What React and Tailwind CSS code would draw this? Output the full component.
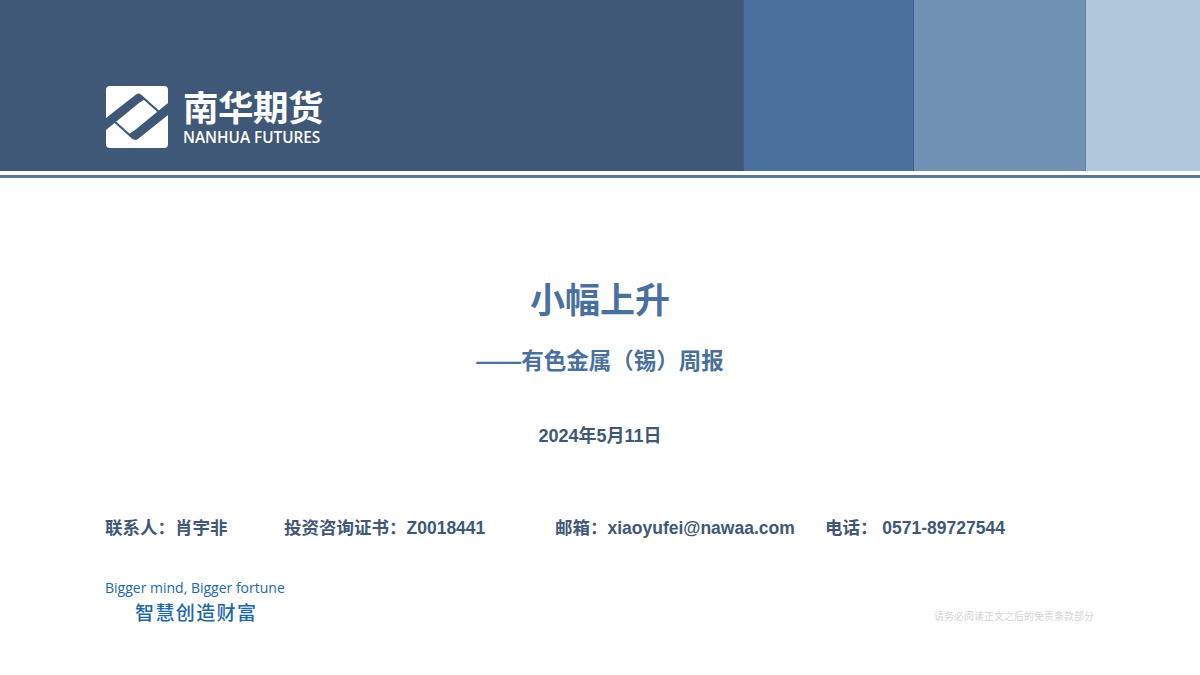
const sans = "font-['Liberation_Sans','Noto_Sans_CJK_SC',sans-serif]";

// logo mark: two dark bands joined by thin edges, on a white tile
function LogoMark() {
  return (
    <svg width="62" height="62" viewBox="0 0 62 62" className="shrink-0">
      <rect x="0" y="0" width="62" height="62" rx="4" fill="#fff" />
      <path d="M0 32 L30 8.5 Q33 6.5 35 9 L39 13 L33 17 L0 44 Z" fill="#3f5877" />
      <path d="M62 29 L32 53 Q29 55 27 52.5 L23 48 L29 44 L62 17 Z" fill="#3f5877" />
      <path d="M34 9 L53 26" stroke="#3f5877" strokeWidth="2.2" />
      <path d="M9 36 L28 53" stroke="#3f5877" strokeWidth="2.2" />
    </svg>
  );
}

export default function App() {
  return (
    <div className={`w-[1200px] h-[675px] bg-white overflow-hidden ${sans}`}>
      {/* header bands */}
      <div className="flex h-[171px]">
        <div className="w-[743px] bg-[#3f5877] flex items-start pt-[86px] pl-[106px]">
          <LogoMark />
          <div className="ml-[15px] text-white">
            <div className="text-[35.5px] leading-[40px] font-bold mt-[3px] tracking-[-0.5px] whitespace-nowrap">南华期货</div>
            <div className="text-[15.3px] leading-[17px] font-['Open_Sans',sans-serif] font-semibold mt-[0px] whitespace-nowrap">NANHUA FUTURES</div>
          </div>
        </div>
        <div className="w-[171px] bg-[#4a709d] border-x border-[#3b5f88]"></div>
        <div className="w-[172px] bg-[#6f92b4] border-r border-[#5f84a8]"></div>
        <div className="flex-1 bg-[#b0c7dc]"></div>
      </div>
      <div className="mt-[4px] h-[3px] bg-[#5a7398]"></div>

      {/* title block */}
      <div className="flex flex-col items-center">
        <h1 className="mt-[103px] text-[35px] leading-[40px] font-bold text-[#4a709d]">小幅上升</h1>
        <h2 className="mt-[28px] text-[22.5px] leading-[26px] font-bold text-[#4a709d]">——有色金属（锡）周报</h2>
        <div className="mt-[51px] text-[18px] leading-[20px] font-bold text-[#3f5877] whitespace-nowrap">2024年5月11日</div>
      </div>

      {/* contacts */}
      <div className="flex mt-[71px] pl-[105px] text-[17.5px] leading-[22px] font-bold text-[#3f5877] whitespace-nowrap">
        <div className="w-[179px]">联系人：肖宇非</div>
        <div className="w-[271px]">投资咨询证书：Z0018441</div>
        <div className="w-[270px]">邮箱：xiaoyufei@nawaa.com</div>
        <div>电话： 0571-89727544</div>
      </div>

      {/* footer */}
      <div className="flex items-start justify-between mt-[40px] pl-[105px] pr-[106px]">
        <div className="text-[#1c68a8]">
          <div className="text-[14px] leading-[18px] font-['Open_Sans',sans-serif]">Bigger mind, Bigger fortune</div>
          <div className="ml-[30px] mt-[4px] text-[19px] leading-[26px] font-medium tracking-[1.4px] whitespace-nowrap">智慧创造财富</div>
        </div>
        <div className="mt-[31px] text-[10px] leading-[14px] text-[#d4d4d4]">请务必阅读正文之后的免责条款部分</div>
      </div>
    </div>
  );
}
